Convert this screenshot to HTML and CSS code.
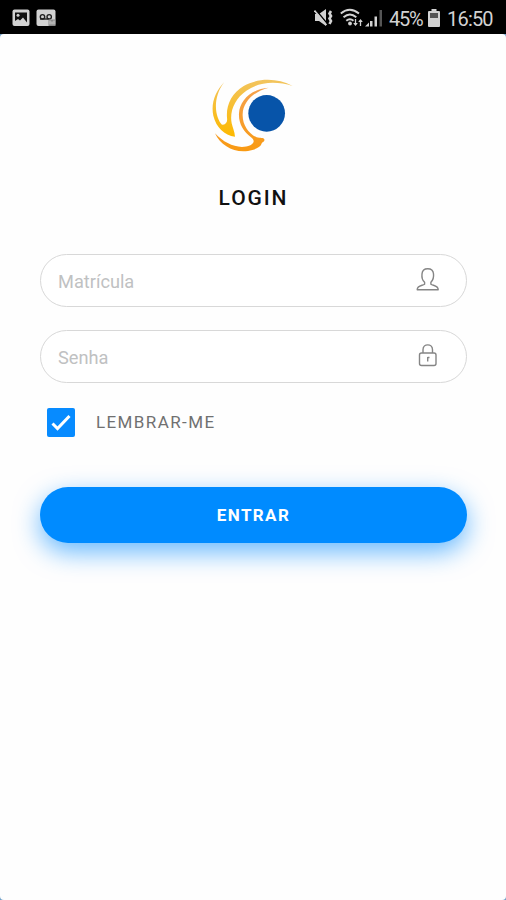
FILE: index.html
```html
<!DOCTYPE html>
<html lang="pt-BR">
<head>
    <meta charset="UTF-8">
    <meta name="viewport" content="width=device-width, initial-scale=1.0">
    <title>Login</title>
    <link rel="stylesheet" href="styles.css">
</head>
<body>
    <div class="status-bar">
        <svg class="icon-picture" width="18" height="18" viewBox="0 0 18 18">
            <rect x="0.5" y="0.5" width="17" height="16.5" rx="2" fill="#d2d2d2"/>
            <path d="M3 3.500h12v10l-4-5-3 3-2-1.500-3 2z" fill="#111"/>
            <circle cx="6" cy="6.300" r="1.500" fill="#d2d2d2"/>
        </svg>
        <svg class="icon-voicemail" width="21" height="18" viewBox="0 0 21 18">
            <rect x="0.500" y="0.500" width="19" height="16.500" rx="2" fill="#d2d2d2"/>
            <g fill="none" stroke="#222" stroke-width="1.400">
                <circle cx="6.500" cy="7.800" r="2.200"/>
                <circle cx="13.200" cy="7.800" r="2.200"/>
                <path d="M4 10h9"/>
            </g>
            <rect x="12.500" y="10.500" width="7" height="6.500" fill="#888"/>
            <path d="M14 11.500v4M16 12.500v3M18 11.500v4" stroke="#ddd"/>
        </svg>
        <div class="status-right">
            <svg class="icon-mute" width="20" height="20" viewBox="0 0 20 20">
                <path d="M1 6h4l7-5v17l-7-5H1z" fill="#d2d2d2"/>
                <path d="M1.500 1.500l12 14.500" stroke="#000" stroke-width="1.500"/>
                <path d="M.5 2.500l12 14.500" stroke="#d2d2d2" stroke-width="1.600"/>
                <path d="M17 3l-1.500 2.500 1.500 2.500-1.500 2.500 1.500 2.500-1.500 3" fill="none" stroke="#d2d2d2" stroke-width="2.600"/>
            </svg>
            <svg class="icon-wifi" width="24" height="20" viewBox="0 0 24 20">
                <g fill="none" stroke="#d2d2d2" stroke-width="1.900">
                    <path d="M.8 5.500q9-7.500 18.200 0"/>
                    <path d="M3.500 9.200q6.400-5.600 12.800 0"/>
                    <path d="M6.300 12.800q3.600-3.200 7.200 0"/>
                </g>
                <circle cx="10" cy="15.500" r="1.900" fill="#d2d2d2"/>
                <path d="M15.500 11v6M20.500 18v-6" stroke="#d2d2d2" stroke-width="1.300"/>
                <path d="M13.200 15h4.600l-2.300 3zM18.200 14h4.600l-2.300-3z" fill="#d2d2d2"/>
            </svg>
            <svg class="icon-signal" width="18" height="18" viewBox="0 0 18 18">
                <path d="M0 17.500l4-4v4zM5 12h2.500v5.500H5zM9.500 7.500H12v10H9.500z" fill="#d2d2d2"/>
                <path d="M14.500 1H17v16.500h-2.500z" fill="#555"/>
            </svg>
            <span class="battery-level">45%</span>
            <svg class="icon-battery" width="12" height="18" viewBox="0 0 12 18">
                <path d="M3.500 0h5v2H11q1 0 1 1v14q0 1-1 1H1q-1 0-1-1V3q0-1 1-1h2.500z" fill="#d2d2d2"/>
                <path d="M2 4h8v5H2z" fill="#555"/>
            </svg>
            <span class="clock">16:50</span>
        </div>
    </div>
    <main class="screen">
        <svg class="logo" width="105" height="90" viewBox="0 0 315 270">
            <defs>
                <linearGradient id="gold" x1="0" y1="0" x2="0" y2="1">
                    <stop offset="0" stop-color="#f2c45e"/>
                    <stop offset="1" stop-color="#fdb900"/>
                </linearGradient>
                <linearGradient id="orange" x1="0" y1="0" x2="0" y2="1">
                    <stop offset="0" stop-color="#f4a14d"/>
                    <stop offset="1" stop-color="#f99a12"/>
                </linearGradient>
            </defs>
            <path d="M73 36C46 64 32 101 40 137C48 171 73 196 105 200C104 184 98 174 95 160C88 122 105 86 139 62C179 34 230 33 278 48C233 23 174 23 131 48C95 70 78 105 81 143C83 156 78 164 66 164C45 142 36 84 73 36Z" fill="url(#gold)"/>
            <path d="M206 53C154 57 119 91 117 130C115 160 130 185 153 202C164 211 164 218 151 226C116 240 75 222 45 190C62 227 101 249 144 243C166 240 181 231 184 223C185 216 195 215 193 208C191 202 180 205 170 202C145 190 127 164 128 133C129 96 160 65 206 53Z" fill="url(#orange)"/>
            <circle cx="200" cy="130" r="55" fill="#0754a9"/>
        </svg>
        <h1>LOGIN</h1>
        <form class="login-form">
            <div class="field">
                <input type="text" placeholder="Matrícula" aria-label="Matrícula">
                <svg class="field-icon" width="24" height="26" viewBox="0 0 24 26">
                    <path d="M8.600 14.200C6 12 5.700 8.500 6 5.800C6.300 2.500 8.700.700 11.700.700S17.200 2.500 17.500 5.800C17.800 8.500 17.300 12 14.900 14.200V16.200C17 17.700 22.200 17.500 22.200 21.700H1.200C1.200 17.500 6.500 17.700 8.600 16.200Z"/>
                </svg>
            </div>
            <div class="field">
                <input type="password" placeholder="Senha" aria-label="Senha">
                <svg class="field-icon" width="24" height="26" viewBox="0 0 24 26">
                    <rect x="3.500" y="9" width="16.500" height="12.500" rx="2"/>
                    <path d="M7 9V5.800C7-.800 16.500-.800 16.500 5.800V9"/>
                    <path d="M11.700 13v4.500M11.700 13.500h1.800" />
                </svg>
            </div>
            <label class="remember">
                <input type="checkbox" checked>
                <span class="checkbox">
                    <svg width="28" height="29" viewBox="0 0 28 29">
                        <path d="M5.500 15.500l5 5L22.500 8"/>
                    </svg>
                </span>
                <span class="remember-text">LEMBRAR-ME</span>
            </label>
            <button type="button" class="btn-enter">ENTRAR</button>
        </form>
    </main>
</body>
</html>
```
FILE: styles.css
```css
* {
    margin: 0;
    padding: 0;
    box-sizing: border-box;
}
body {
    display: flex;
    flex-direction: column;
    height: 100vh;
    overflow: hidden;
    font-family: Roboto, sans-serif;
    background-color: #6f9fc8;
}
svg {
    display: block;
    flex-shrink: 0;
}
.status-bar {
    display: flex;
    align-items: center;
    height: 34px;
    padding: 2px 13px 0 12px;
    background-color: #000;
    color: #d2d2d2;
    font-size: 20px;
}
.icon-voicemail {
    margin-left: 6px;
}
.status-right {
    display: flex;
    align-items: center;
    margin-left: auto;
}
.icon-wifi {
    margin-left: 6px;
}
.icon-signal {
    margin-left: 1px;
}
.battery-level {
    width: 34px;
    margin-left: 6px;
    padding-top: 2px;
    letter-spacing: -1.2px;
}
.icon-battery {
    margin: 0 7px 0 5px;
}
.clock {
    width: 46px;
    padding-top: 2px;
    letter-spacing: -0.8px;
}
.screen {
    flex: 1;
    display: flex;
    flex-direction: column;
    align-items: center;
    padding: 36px 39px 0 40px;
    background-color: #fefefe;
    border-radius: 4px;
}
.logo {
    margin-right: 2px;
}
h1 {
    margin-top: 26px;
    font-size: 21px;
    line-height: 24px;
    font-weight: 500;
    letter-spacing: 1.9px;
    color: #111;
}
.login-form {
    width: 100%;
    margin-top: 44px;
}
.field {
    display: flex;
    align-items: center;
    height: 53px;
    margin-bottom: 23px;
    padding: 0 26px 0 17px;
    border: 1.5px solid #d8d8d8;
    border-radius: 27px;
    background-color: #fff;
}
.field input {
    flex: 1;
    min-width: 0;
    padding-top: 1px;
    border: none;
    outline: none;
    background: none;
    font-family: inherit;
    font-size: 18.2px;
    color: #555;
}
.field input::placeholder {
    color: #bfc1c2;
}
.field-icon {
    overflow: visible;
    fill: none;
    stroke: #858585;
    stroke-width: 1.4;
    stroke-linejoin: round;
}
.remember {
    display: flex;
    align-items: center;
    margin: 25px 0 0 7px;
    font-size: 17px;
    letter-spacing: 1.4px;
    color: #707070;
}
.remember input {
    display: none;
}
.remember-text {
    padding-bottom: 2px;
}
.checkbox {
    width: 28px;
    height: 29px;
    margin-right: 21px;
    border-radius: 2px;
    background-color: #078bff;
}
.checkbox path {
    fill: none;
    stroke: #fff;
    stroke-width: 3;
}
.btn-enter {
    display: block;
    width: 100%;
    height: 56px;
    margin-top: 50px;
    border: none;
    border-radius: 28px;
    background-color: #008bff;
    box-shadow: 0 9px 26px rgba(0, 139, 255, 0.6);
    color: #fff;
    font-family: inherit;
    font-size: 17px;
    font-weight: 700;
    letter-spacing: 1.4px;
}
```
